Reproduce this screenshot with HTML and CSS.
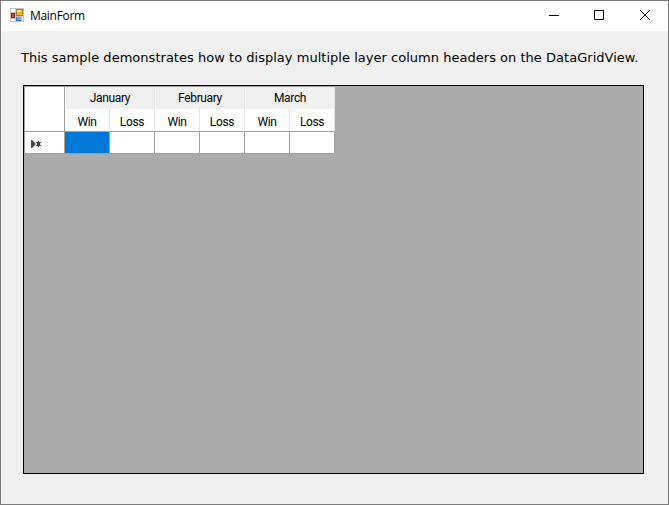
FILE: index.html
```html
<!DOCTYPE html>
<html lang="en">
<head>
<meta charset="utf-8">
<title>MainForm</title>
<link rel="stylesheet" href="styles.css">
</head>
<body>
<div class="window">
  <header class="titlebar">
    <svg class="app-icon" width="14" height="14" viewBox="0 0 14 14" shape-rendering="crispEdges">
      <path fill="#c3c3c3" d="M0 0h14v14H0z"/>
      <path fill="#fff" d="M1 1h4v3H1zM1 11h4v2H1zM12 9h1v4h-1z"/>
      <path fill="#a77c19" d="M6 1h7v7H6z"/><path fill="#f4b62c" d="M7 2h5v5H7z"/><path fill="#ffe48c" d="M7 2h4v2H7z"/>
      <path fill="#8d1c16" d="M1 5h4v5H1z"/><path fill="#d94a3c" d="M2 6h2v3H2z"/>
      <path fill="#3568b8" d="M6 9h5v4H6z"/><path fill="#69a4f0" d="M7 9h4v3H7z"/>
    </svg>
    <h1 class="title">MainForm</h1>
    <div class="controls">
      <svg width="46" height="30" viewBox="0 0 46 30"><path class="glyph" d="M17 14.5h10" /></svg>
      <svg width="46" height="30" viewBox="0 0 46 30"><path class="glyph" d="M16.5 9.500h9v9h-9z"/></svg>
      <svg width="46" height="30" viewBox="0 0 46 30"><path class="glyph" d="M16 9l10 10M26 9l-10 10"/></svg>
    </div>
  </header>
  <main class="form">
    <p class="description">This sample demonstrates how to display multiple layer column headers on the DataGridView.</p>
    <div class="grid-view">
      <table class="grid">
        <colgroup><col class="row-col"><col><col><col><col><col><col></colgroup>
        <thead>
          <tr class="months"><td class="corner" rowspan="2"></td><th colspan="2"><div>January</div></th><th colspan="2"><div>February</div></th><th colspan="2"><div>March</div></th></tr>
          <tr class="columns"><th>Win</th><th>Loss</th><th>Win</th><th>Loss</th><th>Win</th><th>Loss</th></tr>
        </thead>
        <tbody>
          <tr>
            <td class="row-header"><svg width="12" height="9" viewBox="0 0 12 9"><path fill="#454545" d="M1 0h1l4 4-4 4H1z"/><path fill="#454545" shape-rendering="crispEdges" d="M8 1h1v1h2v1h-1v2h1v1H9v1H8V6H6V5h1V3H6V2h2z"/></svg></td>
            <td class="selected"></td><td></td><td></td><td></td><td></td><td></td>
          </tr>
        </tbody>
      </table>
    </div>
  </main>
</div>
</body>
</html>
```
FILE: styles.css
```css
* { box-sizing: border-box; }
body { margin: 0; color: #000; font: 12px "Open Sans", "Noto Sans", sans-serif; }
.window { width: 669px; height: 505px; border: 1px solid #7a7a7a; background: #f0f0f0; overflow: hidden; }
.titlebar { display: flex; height: 30px; background: #fff; padding-left: 9px; }
.app-icon { margin-top: 7px; }
.title { margin: 0 auto 0 6px; font-size: 12px; font-weight: 400; line-height: 30px; letter-spacing: -0.3px; }
.controls { display: flex; width: 136px; }
.controls svg { display: block; flex: none; }
.glyph { fill: none; stroke: #000; stroke-width: 1; }
.form { padding: 17px 24px 0 22px; }
.description { margin: 0 0 0 -2px; height: 37px; font: 13px/20px "DejaVu Sans", Verdana, sans-serif; white-space: nowrap; letter-spacing: 0.023px; }
.grid-view { width: 621px; height: 389px; border: 1px solid #000; background: #ababab; }
.grid { width: 311px; table-layout: fixed; border-collapse: separate; border-spacing: 0; border-top: 1px solid #a0a0a0; border-left: 1px solid #a0a0a0; }
.grid col { width: 45px; }
.grid .row-col { width: 40px; }
.grid th, .grid td { padding: 0; background: #fff; border-right: 1px solid #a0a0a0; border-bottom: 1px solid #a0a0a0; }
.grid th { font: 12px/16px Roboto, "Liberation Sans", sans-serif; letter-spacing: -0.35px; text-align: center; border-right-color: #e3e3e3; }
.months { height: 22px; }
.grid .months th { border-bottom: 0; border-right-color: #e3e3e3; }
.months div { height: 22px; margin-left: 1px; padding-top: 3px; background: #f0f0f0; }
.columns { height: 23px; }
.grid .columns th { padding: 4px 0 0; }
.grid tbody tr { height: 22px; }
.grid tbody td { height: 22px; }
.grid .selected { background: #0078d7; }
.row-header svg { display: block; margin: 3px 0 0 5px; }
```
